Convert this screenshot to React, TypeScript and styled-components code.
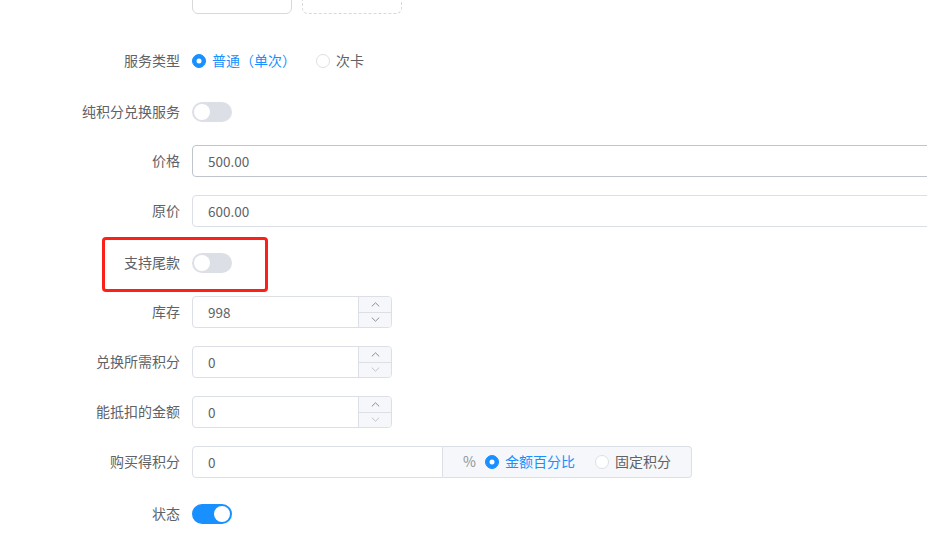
import React from 'react';
import styled, { createGlobalStyle } from 'styled-components';

const BLUE = '#1890ff';
const BORDER = '#dcdfe6';
const TEXT = '#606266';

const GlobalStyle = createGlobalStyle`
  html, body {
    margin: 0;
    padding: 0;
    background: #fff;
  }
  body {
    font-family: 'Noto Sans CJK SC', 'Liberation Sans', sans-serif;
    font-size: 14px;
    color: ${TEXT};
    overflow: hidden;
  }
`;

const Viewport = styled.div`
  width: 927px;
  height: 534px;
  overflow: hidden;
`;

// the page is scrolled: the upload row sits mostly above the top edge
const Form = styled.div`
  width: 1120px;
  margin-top: -86px;
  display: flex;
  flex-direction: column;
`;

const FormItem = styled.div<{ $before?: number; $after?: number }>`
  position: relative;
  display: flex;
  align-items: center;
  min-height: 32px;
  margin-top: ${(p) => p.$before ?? 0}px;
  margin-bottom: ${(p) => p.$after ?? 18}px;
`;

const Label = styled.label`
  flex-shrink: 0;
  width: 192px;
  box-sizing: border-box;
  padding: 0 12px 2px 0;
  text-align: right;
  line-height: 30px;
  font-size: 14px;
  color: ${TEXT};
`;

const Content = styled.div`
  flex: 1;
  display: flex;
  align-items: center;
  min-height: 32px;
`;

const UploadList = styled.div`
  display: flex;
  gap: 10px;
`;

const UploadCard = styled.div<{ $dashed?: boolean }>`
  width: 100px;
  height: 100px;
  box-sizing: border-box;
  border-radius: 6px;
  border: 1px ${(p) => (p.$dashed ? 'dashed' : 'solid')} #d9d9d9;
  background: #fff;
`;

const RadioGroup = styled.div`
  display: flex;
  align-items: center;
`;

const RadioOption = styled.label<{ $checked?: boolean }>`
  display: inline-flex;
  align-items: center;
  gap: 6px;
  margin-right: 20px;
  font-size: 14px;
  line-height: 20px;
  color: ${(p) => (p.$checked ? BLUE : TEXT)};
  &:last-child {
    margin-right: 0;
  }
`;

const RadioText = styled.span`
  position: relative;
  top: -1px;
`;

const RadioDot = styled.span<{ $checked?: boolean }>`
  position: relative;
  width: 14px;
  height: 14px;
  box-sizing: border-box;
  border-radius: 50%;
  border: 1px solid ${(p) => (p.$checked ? BLUE : BORDER)};
  background: ${(p) => (p.$checked ? BLUE : '#fff')};
  &::after {
    content: '';
    display: ${(p) => (p.$checked ? 'block' : 'none')};
    position: absolute;
    left: 50%;
    top: 50%;
    width: 5px;
    height: 5px;
    border-radius: 50%;
    background: #fff;
    transform: translate(-50%, -50%);
  }
`;

const Switch = styled.span<{ $on?: boolean }>`
  position: relative;
  display: inline-block;
  width: 40px;
  height: 20px;
  border-radius: 10px;
  background: ${(p) => (p.$on ? BLUE : BORDER)};
  &::after {
    content: '';
    position: absolute;
    top: 2px;
    left: ${(p) => (p.$on ? '22px' : '2px')};
    width: 16px;
    height: 16px;
    border-radius: 50%;
    background: #fff;
  }
`;

const TextInput = styled.div<{ $hover?: boolean }>`
  flex: 1;
  height: 32px;
  box-sizing: border-box;
  display: flex;
  align-items: center;
  padding: 0 15px 1px;
  border: 1px solid ${(p) => (p.$hover ? '#c0c4cc' : BORDER)};
  border-radius: 4px;
  font-size: 13.5px;
  color: ${TEXT};
`;

const NumberBox = styled.div`
  width: 200px;
  height: 32px;
  box-sizing: border-box;
  display: flex;
  border: 1px solid ${BORDER};
  border-radius: 4px;
  overflow: hidden;
`;

const NumberValue = styled.span`
  flex: 1;
  display: flex;
  align-items: center;
  padding: 0 0 1px 15px;
  font-size: 13.5px;
  color: ${TEXT};
`;

const Steppers = styled.div`
  width: 32px;
  display: flex;
  flex-direction: column;
  border-left: 1px solid ${BORDER};
  background: #f5f7fa;
`;

const StepButton = styled.span`
  flex: 1;
  display: flex;
  align-items: center;
  justify-content: center;
  & + & {
    border-top: 1px solid ${BORDER};
  }
`;

const InputGroup = styled.div`
  width: 500px;
  height: 32px;
  display: flex;
`;

const GroupInput = styled(TextInput)`
  border-radius: 4px 0 0 4px;
`;

const Append = styled.div`
  display: flex;
  align-items: center;
  gap: 9px;
  padding: 0 20px;
  box-sizing: border-box;
  border: 1px solid ${BORDER};
  border-left: none;
  border-radius: 0 4px 4px 0;
  background: #f5f7fa;
`;

const Unit = styled.span`
  position: relative;
  top: -1px;
  font-size: 14px;
  color: #909399;
`;

// red annotation box drawn around one row
const Highlight = styled.div`
  position: absolute;
  left: 102px;
  top: -10px;
  width: 166px;
  height: 55px;
  box-sizing: border-box;
  border: 3px solid #fb2118;
  border-radius: 4px;
  pointer-events: none;
`;

const Chevron = ({ up, muted }: { up?: boolean; muted?: boolean }) => (
  <svg width="9" height="5" viewBox="0 0 9 5">
    <polyline
      points={up ? '0.8,4.4 4.5,0.8 8.2,4.4' : '0.8,0.6 4.5,4.2 8.2,0.6'}
      fill="none"
      stroke={muted ? '#c0c4cc' : '#8a8d93'}
      strokeWidth="1"
    />
  </svg>
);

const NumberInput = ({ value, atMin }: { value: string; atMin?: boolean }) => (
  <NumberBox>
    <NumberValue>{value}</NumberValue>
    <Steppers>
      <StepButton>
        <Chevron up />
      </StepButton>
      <StepButton>
        <Chevron muted={atMin} />
      </StepButton>
    </Steppers>
  </NumberBox>
);

const Radio = ({ checked, children }: { checked?: boolean; children: React.ReactNode }) => (
  <RadioOption $checked={checked}>
    <RadioDot $checked={checked} />
    <RadioText>{children}</RadioText>
  </RadioOption>
);

export default function App() {
  return (
    <Viewport>
      <GlobalStyle />
      <Form>
        <FormItem $after={31}>
          <Label />
          <Content>
            <UploadList>
              <UploadCard />
              <UploadCard $dashed />
            </UploadList>
          </Content>
        </FormItem>

        <FormItem>
          <Label>服务类型</Label>
          <Content>
            <RadioGroup>
              <Radio checked>普通（单次）</Radio>
              <Radio>次卡</Radio>
            </RadioGroup>
          </Content>
        </FormItem>

        <FormItem $before={1} $after={17}>
          <Label>纯积分兑换服务</Label>
          <Content>
            <Switch />
          </Content>
        </FormItem>

        <FormItem>
          <Label>价格</Label>
          <Content>
            <TextInput $hover>500.00</TextInput>
          </Content>
        </FormItem>

        <FormItem>
          <Label>原价</Label>
          <Content>
            <TextInput>600.00</TextInput>
          </Content>
        </FormItem>

        <FormItem $before={2} $after={17}>
          <Label>支持尾款</Label>
          <Content>
            <Switch />
          </Content>
          <Highlight />
        </FormItem>

        <FormItem>
          <Label>库存</Label>
          <Content>
            <NumberInput value="998" />
          </Content>
        </FormItem>

        <FormItem>
          <Label>兑换所需积分</Label>
          <Content>
            <NumberInput value="0" atMin />
          </Content>
        </FormItem>

        <FormItem>
          <Label>能抵扣的金额</Label>
          <Content>
            <NumberInput value="0" atMin />
          </Content>
        </FormItem>

        <FormItem>
          <Label>购买得积分</Label>
          <Content>
            <InputGroup>
              <GroupInput>0</GroupInput>
              <Append>
                <Unit>%</Unit>
                <RadioGroup>
                  <Radio checked>金额百分比</Radio>
                  <Radio>固定积分</Radio>
                </RadioGroup>
              </Append>
            </InputGroup>
          </Content>
        </FormItem>

        <FormItem $before={2}>
          <Label>状态</Label>
          <Content>
            <Switch $on />
          </Content>
        </FormItem>
      </Form>
    </Viewport>
  );
}
